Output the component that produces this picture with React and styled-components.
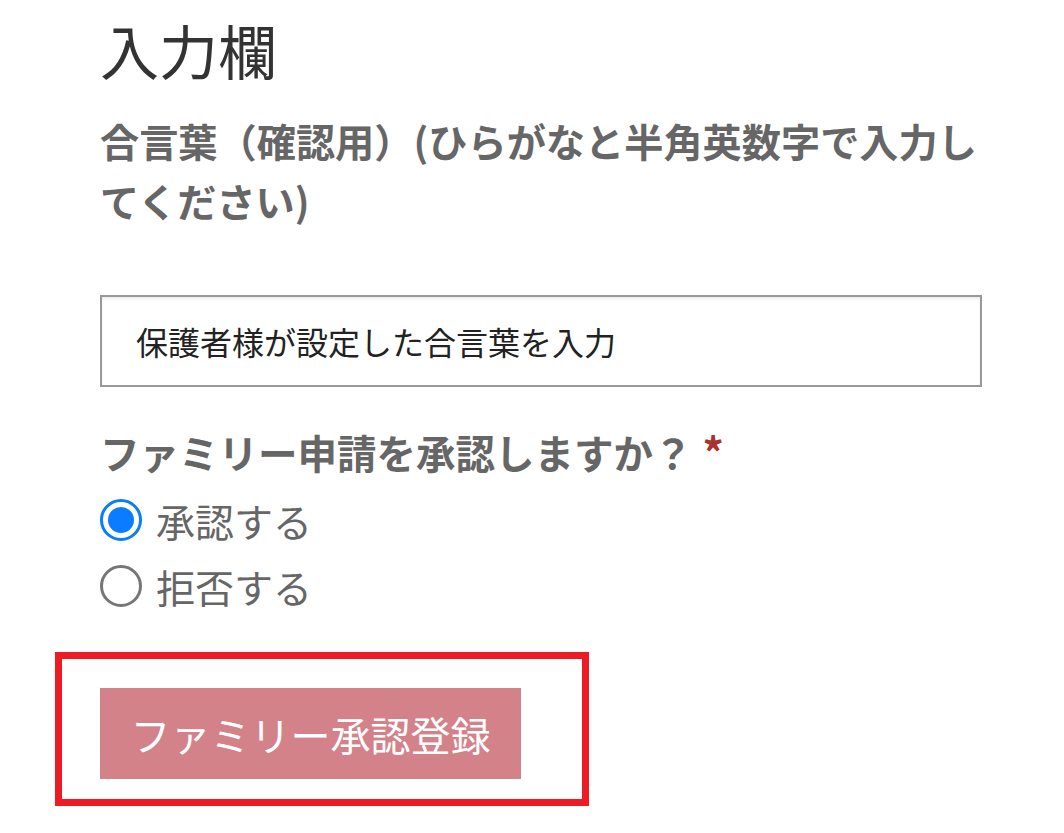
import React, { useState } from 'react';
import styled, { createGlobalStyle } from 'styled-components';

const GlobalStyle = createGlobalStyle`
  body {
    margin: 0;
    background: #ffffff;
    font-family: "Noto Sans CJK JP", "Noto Sans", sans-serif;
  }
`;

const Page = styled.div`
  padding: 10px 0 0 100px;
  width: 882px;
`;

const Title = styled.h2`
  margin: 0;
  font-size: 59px;
  font-weight: 400;
  line-height: 80px;
  color: #333333;
`;

const FieldLabel = styled.label`
  display: block;
  margin-top: 20px;
  font-size: 39.2px;
  font-weight: 700;
  line-height: 60px;
  color: #666666;
`;

const TextInput = styled.input`
  display: block;
  box-sizing: border-box;
  width: 882px;
  height: 92px;
  margin-top: 65px;
  padding: 0 34px;
  border: 2px solid #999999;
  box-shadow: inset 0 2px 3px rgba(0, 0, 0, 0.08);
  font-family: inherit;
  font-size: 32px;
  color: #222222;
  outline: none;

  &::placeholder {
    color: #222222;
    opacity: 1;
  }
`;

const Question = styled.div`
  margin-top: 36px;
  font-size: 39.5px;
  font-weight: 700;
  line-height: 56px;
  color: #666666;
`;

const Required = styled.span`
  margin-left: 10px;
  font-size: 42px;
  color: #a83232;
`;

const Options = styled.div`
  display: flex;
  flex-direction: column;
  gap: 14px;
  margin-top: 14px;
`;

const Option = styled.label`
  display: flex;
  align-items: center;
  gap: 14px;
  font-size: 39px;
  line-height: 52px;
  color: #666666;
  cursor: pointer;
`;

const RadioDot = styled.span`
  box-sizing: border-box;
  width: 42px;
  height: 42px;
  border-radius: 50%;
  border: ${({ checked }) => (checked ? '3px solid #0a7cff' : '3px solid #767676')};
  display: flex;
  align-items: center;
  justify-content: center;

  &::after {
    content: '';
    width: 26px;
    height: 26px;
    border-radius: 50%;
    background: #0a7cff;
    display: ${({ checked }) => (checked ? 'block' : 'none')};
  }
`;

const Highlight = styled.div`
  display: inline-block;
  margin: 40px 0 0 -45px;
  padding: 29px 61px 20px 38px;
  border: 7px solid #ed1c24;
`;

const SubmitButton = styled.button`
  display: block;
  width: 421px;
  height: 91px;
  border: none;
  background: #d4828a;
  color: #ffffff;
  font-family: inherit;
  font-size: 40px;
  cursor: pointer;
`;

const App = () => {
  const [answer, setAnswer] = useState('yes');

  return (
    <Page>
      <GlobalStyle />
      <Title>入力欄</Title>
      <FieldLabel>合言葉（確認用）(ひらがなと半角英数字で入力してください)</FieldLabel>
      <TextInput placeholder="保護者様が設定した合言葉を入力" />
      <Question>
        ファミリー申請を承認しますか？<Required>*</Required>
      </Question>
      <Options>
        <Option onClick={() => setAnswer('yes')}>
          <RadioDot checked={answer === 'yes'} />
          承認する
        </Option>
        <Option onClick={() => setAnswer('no')}>
          <RadioDot checked={answer === 'no'} />
          拒否する
        </Option>
      </Options>
      <Highlight>
        <SubmitButton>ファミリー承認登録</SubmitButton>
      </Highlight>
    </Page>
  );
};

export default App;
